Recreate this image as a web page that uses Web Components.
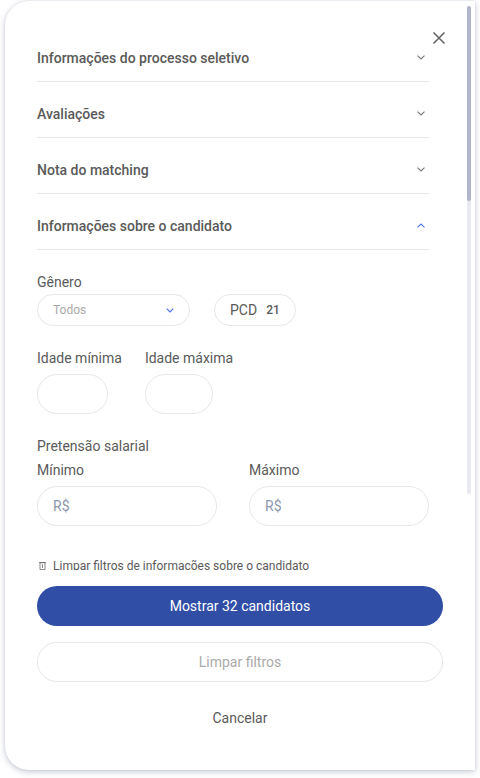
<!DOCTYPE html>
<html lang="pt-BR">
<head>
<meta charset="utf-8">
<title>Filtros</title>
<style>
  html, body { margin: 0; padding: 0; background: #fff; }
  body { font-family: Roboto, "Liberation Sans", sans-serif; color: #5a5a5a; height: 778px; overflow: hidden; }
</style>
</head>
<body>
<filter-modal>
  <accordion-row>Informações do processo seletivo</accordion-row>
  <accordion-row>Avaliações</accordion-row>
  <accordion-row>Nota do matching</accordion-row>
  <accordion-row open>Informações sobre o candidato</accordion-row>
  <candidate-filters></candidate-filters>
  <pill-button slot="footer" kind="primary">Mostrar 32 candidatos</pill-button>
  <pill-button slot="footer" kind="outline">Limpar filtros</pill-button>
  <pill-button slot="footer" kind="text">Cancelar</pill-button>
</filter-modal>

<script>
class FilterModal extends HTMLElement {
  constructor() {
    super();
    this.attachShadow({ mode: 'open' }).innerHTML = `
      <style>
        :host { display: block; width: 470px; height: 769px; margin: 1px 0 0 5px; background: #fff;
          border-radius: 24px 0 0 24px; box-shadow: 0 2px 6px rgba(90, 100, 140, .32), 0 0 2px rgba(90, 100, 140, .18);
          position: relative; overflow: hidden; }
        * { box-sizing: border-box; }
        .top { display: flex; height: 569px; }
        .scroll { width: 462px; padding: 25px 0 0 32px; overflow: hidden; }
        .inner { width: 392px; }
        .bar { width: 4px; height: 488px; margin-top: 5px; background: #e9eaf0; border-radius: 2px; }
        .thumb { height: 195px; background: #b1b6c8; border-radius: 2px; }
        .foot { display: flex; flex-direction: column; gap: 16px; padding: 16px 32px 0; }
        .close { position: absolute; left: 427px; top: 30px; width: 14px; height: 14px; }
      </style>
      <div class="top">
        <div class="scroll"><div class="inner"><slot></slot></div></div>
        <div class="bar"><div class="thumb"></div></div>
      </div>
      <div class="foot"><slot name="footer"></slot></div>
      <svg class="close" viewBox="0 0 14 14" fill="none" stroke="#666" stroke-width="1.6"><path d="M1.5 1.5l11 11M12.5 1.5l-11 11"/></svg>
    `;
  }
}

class AccordionRow extends HTMLElement {
  constructor() {
    super();
    const open = this.hasAttribute('open');
    this.attachShadow({ mode: 'open' }).innerHTML = `
      <style>
        :host { display: flex; align-items: center; justify-content: space-between; height: 56px; padding-top: 8px;
          border-bottom: 1px solid #e6e7ea; box-sizing: border-box; font: 500 14px Roboto, sans-serif; color: #5a5a5a; }
        svg { width: 8px; height: 5px; margin-right: 4px; }
      </style>
      <span><slot></slot></span>
      <svg viewBox="0 0 8 5" fill="none" stroke="${open ? '#4a75e0' : '#777'}" stroke-width="1.1">
        <path d="${open ? 'M.5 4.3L4 1l3.5 3.3' : 'M.5.7L4 4l3.5-3.3'}"/>
      </svg>
    `;
  }
}

class PillBox extends HTMLElement {
  constructor() {
    super();
    this.attachShadow({ mode: 'open' }).innerHTML = `
      <style>
        :host { display: flex; align-items: center; box-sizing: border-box; border: 1px solid #e6e7ea;
          border-radius: 20px; padding: 0 15px; font-size: 14px; color: #8d97ae; background: #fff; }
      </style>
      <slot></slot>
    `;
  }
}

class FieldLabel extends HTMLElement {
  constructor() {
    super();
    this.attachShadow({ mode: 'open' }).innerHTML = `
      <style>
        :host { display: block; font-size: 14px; line-height: 16px; color: #5a5a5a; }
      </style>
      <slot></slot>
    `;
  }
}

class CandidateFilters extends HTMLElement {
  constructor() {
    super();
    this.attachShadow({ mode: 'open' }).innerHTML = `
      <style>
        :host { display: block; padding-top: 24px; font-family: Roboto, sans-serif; }
        .row { display: flex; }
        .gender { gap: 24px; margin-top: 4px; }
        .select { width: 153px; height: 32px; justify-content: space-between; font-size: 12px; color: #aaa; }
        .select svg { width: 8px; height: 5px; }
        .pcd { width: 82px; height: 32px; color: #5a5a5a; }
        .pcd b { font-size: 12px; font-weight: 500; margin-left: 9px; }
        .ages { gap: 23px; margin-top: 24px; }
        .ages field-label { margin-bottom: 8px; }
        .a1 { width: 71px; height: 40px; }
        .a2 { width: 68px; height: 40px; }
        .salary { margin-top: 24px; }
        .money { gap: 32px; margin-top: 8px; }
        .money field-label { margin-bottom: 8px; }
        .m { width: 180px; height: 40px; }
        .clear { display: flex; align-items: center; gap: 7px; margin: 33px 0 0 2px; font-size: 12px; line-height: 14px; color: #5a5a5a; }
        .clear svg { width: 7px; height: 8px; }
      </style>
      <field-label>Gênero</field-label>
      <div class="row gender">
        <pill-box class="select">Todos
          <svg viewBox="0 0 8 5" fill="none" stroke="#4a75e0" stroke-width="1.2"><path d="M.7.7L4 4 7.3.7"/></svg>
        </pill-box>
        <pill-box class="pcd">PCD<b>21</b></pill-box>
      </div>
      <div class="row ages">
        <div><field-label>Idade mínima</field-label><pill-box class="a1"></pill-box></div>
        <div><field-label>Idade máxima</field-label><pill-box class="a2"></pill-box></div>
      </div>
      <field-label class="salary">Pretensão salarial</field-label>
      <div class="row money">
        <div><field-label>Mínimo</field-label><pill-box class="m">R$</pill-box></div>
        <div><field-label>Máximo</field-label><pill-box class="m">R$</pill-box></div>
      </div>
      <div class="clear">
        <svg viewBox="0 0 7 8" fill="none" stroke="#666" stroke-width=".8"><path d="M0 .6h7M1 .6h5v7H1zM3.5 2.2v3.8"/></svg>
        <span>Limpar filtros de informações sobre o candidato</span>
      </div>
    `;
  }
}

class PillButton extends HTMLElement {
  constructor() {
    super();
    this.attachShadow({ mode: 'open' }).innerHTML = `
      <style>
        :host { display: flex; align-items: center; justify-content: center; height: 40px; box-sizing: border-box;
          border-radius: 20px; font: 14px Roboto, sans-serif; }
        :host([kind="primary"]) { background: #304ea6; color: #fff; }
        :host([kind="outline"]) { border: 1px solid #e6e7ea; color: #aaa; }
        :host([kind="text"]) { color: #5a5a5a; }
      </style>
      <slot></slot>
    `;
  }
}

customElements.define('filter-modal', FilterModal);
customElements.define('accordion-row', AccordionRow);
customElements.define('pill-box', PillBox);
customElements.define('field-label', FieldLabel);
customElements.define('candidate-filters', CandidateFilters);
customElements.define('pill-button', PillButton);
</script>
</body>
</html>
